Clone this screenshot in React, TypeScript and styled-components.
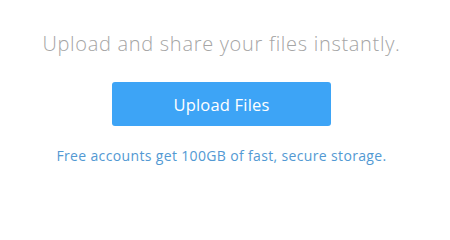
import React from "react";
import styled, { createGlobalStyle } from "styled-components";

const Global = createGlobalStyle`
  html, body { margin: 0; padding: 0; background: #ffffff; }
  body { font-family: "Open Sans", "Liberation Sans", sans-serif; }
`;

const Page = styled.main`
  width: 450px;
  height: 213px;
  display: flex;
  flex-direction: column;
  align-items: center;
  box-sizing: border-box;
  padding: 31px 7px 0 0;
`;

const Heading = styled.h1`
  margin: 0;
  font-family: "Open Sans", sans-serif;
  font-weight: 300;
  font-size: 20px;
  line-height: 26px;
  color: #a5a5a5;
  letter-spacing: 0.7px;
  white-space: nowrap;
`;

const Button = styled.button`
  margin-top: 25px;
  width: 219px;
  height: 44px;
  border: none;
  border-radius: 3px;
  background: #3da4f6;
  color: #ffffff;
  font-family: "Open Sans", sans-serif;
  font-size: 16.5px;
  font-weight: 400;
  letter-spacing: 0.2px;
  cursor: pointer;
  padding: 0;
`;

const Note = styled.p`
  margin: 21px 0 0;
  font-family: "Open Sans", sans-serif;
  font-size: 14px;
  line-height: 18px;
  color: #5299d3;
  letter-spacing: 0.35px;
  white-space: nowrap;
`;

export default function App() {
  return (
    <>
      <Global />
      <Page>
        <Heading>Upload and share your files instantly.</Heading>
        <Button>Upload Files</Button>
        <Note>Free accounts get 100GB of fast, secure storage.</Note>
      </Page>
    </>
  );
}
